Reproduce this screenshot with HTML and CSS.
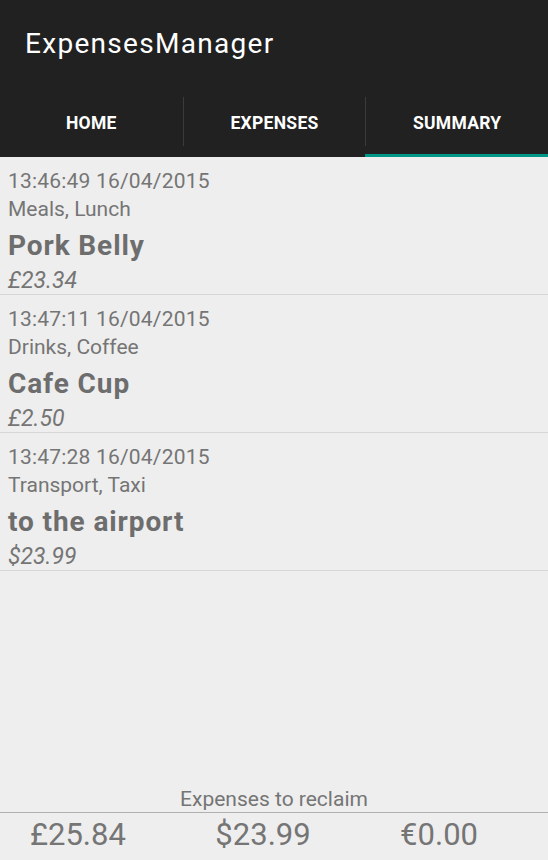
FILE: index.html
```html
<!DOCTYPE html>
<html>
<head>
<meta charset="utf-8">
<link rel="stylesheet" href="styles.css">
</head>
<body>
<div class="app">
  <header class="appbar">
    <div class="title">ExpensesManager</div>
    <nav class="tabs">
      <div class="tab"><span class="tab-label">HOME</span></div>
      <div class="tab"><span class="tab-label sep">EXPENSES</span></div>
      <div class="tab active"><span class="tab-label sep">SUMMARY</span></div>
    </nav>
  </header>
  <main class="list">
    <div class="item">
      <div class="stamp">13:46:49 16/04/2015</div>
      <div class="cat">Meals, Lunch</div>
      <div class="name">Pork Belly</div>
      <div class="amount">£23.34</div>
    </div>
    <div class="item">
      <div class="stamp">13:47:11 16/04/2015</div>
      <div class="cat">Drinks, Coffee</div>
      <div class="name">Cafe Cup</div>
      <div class="amount">£2.50</div>
    </div>
    <div class="item">
      <div class="stamp">13:47:28 16/04/2015</div>
      <div class="cat">Transport, Taxi</div>
      <div class="name">to the airport</div>
      <div class="amount">$23.99</div>
    </div>
  </main>
  <footer class="summary">
    <div class="summary-label">Expenses to reclaim</div>
    <div class="totals">
      <span class="total">£25.84</span>
      <span class="total">$23.99</span>
      <span class="total">€0.00</span>
    </div>
  </footer>
</div>
</body>
</html>
```
FILE: styles.css
```css
html, body {
  margin: 0;
  padding: 0;
}
body {
  font-family: Roboto, "Noto Sans", sans-serif;
  background: #eeeeee;
  color: #757575;
}
.app {
  height: 860px;
  display: flex;
  flex-direction: column;
}
.appbar {
  background: #212121;
  color: #ffffff;
}
.title {
  height: 97px;
  line-height: 88px;
  padding-left: 25px;
  font-size: 28px;
  letter-spacing: 1.3px;
}
.tabs {
  display: flex;
}
.tab {
  flex: 1 1 0;
  padding-bottom: 8px;
  border-bottom: 3px solid transparent;
}
.tab.active {
  border-bottom-color: #009688;
}
.tab-label {
  display: block;
  height: 49px;
  line-height: 53px;
  text-align: center;
  font-weight: bold;
  font-size: 17.5px;
  letter-spacing: 0.3px;
}
.tab-label.sep {
  border-left: 1px solid #3b3b3b;
}
.list {
  flex: 1 1 auto;
}
.item {
  padding: 10px 8px 0;
  border-bottom: 1px solid #d6d6d6;
}
.stamp, .cat {
  font-size: 21px;
  line-height: 28px;
}
.stamp {
  letter-spacing: 0.2px;
}
.name {
  font-size: 28px;
  font-weight: bold;
  line-height: 43px;
  padding-top: 1px;
  letter-spacing: 0.9px;
  color: #6d6d6d;
}
.amount {
  font-size: 23px;
  font-style: italic;
  line-height: 27px;
}
.summary-label {
  text-align: center;
  font-size: 21px;
  line-height: 26px;
}
.totals {
  border-top: 1px solid #b0b0b0;
  display: flex;
  justify-content: space-between;
  padding: 0 70px 3px 30px;
  font-size: 31px;
  line-height: 44px;
}
```
